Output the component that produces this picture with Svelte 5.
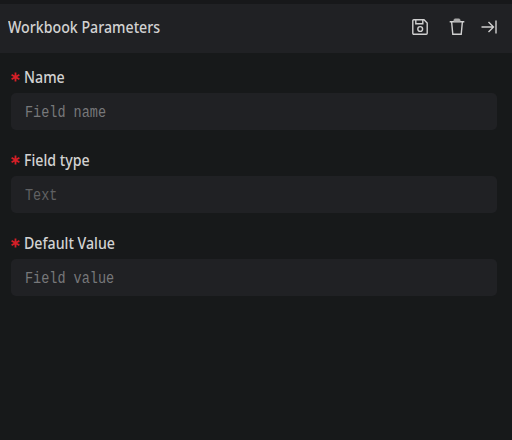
<script>
  const fields = [
    { label: 'Name', hint: 'Field name' },
    { label: 'Field type', hint: 'Text', select: true },
    { label: 'Default Value', hint: 'Field value' }
  ];
</script>

<main>
  <header>
    <h1><span>Workbook Parameters</span></h1>
    <div class="actions">
      <button aria-label="Save">
        <svg width="16" height="16" viewBox="0 0 16 16">
          <path d="M1.8 .8H12L15.2 4v10.2a1 1 0 0 1-1 1H1.8a1 1 0 0 1-1-1V1.8a1 1 0 0 1 1-1ZM3.8 1v3.7h7V1" />
          <circle cx="8.2" cy="10" r="2.4" />
        </svg>
      </button>
      <button aria-label="Delete">
        <svg width="16" height="18" viewBox="0 0 16 18">
          <path d="M.7 3.7h14.6M2.6 3.8l1.2 12.5h8.4l1.2-12.5" />
          <path class="lid" d="M5 3.2V2.1Q5 1 6.1 1h3.8Q11 1 11 2.1v1.1Z" />
        </svg>
      </button>
      <button aria-label="Collapse">
        <svg width="16" height="14" viewBox="0 0 16 14">
          <path d="M.5 7h11.7M7.5 2l5 5-5 5M15 .5v13" />
        </svg>
      </button>
    </div>
  </header>
  <form>
    {#each fields as field}
      <div class="field">
        <div class="label">
          <svg class="star" width="9" height="10" viewBox="0 0 9 10">
            <path d="M4.5 .4v9.2M.6 2.7l7.8 4.6M8.4 2.7l-7.8 4.6" />
          </svg>
          <span>{field.label}</span>
        </div>
        <div class="input" class:select={field.select}><span>{field.hint}</span></div>
      </div>
    {/each}
  </form>
</main>

<style>
  :global(body) { margin: 0; background: #17191a; }
  main {
    box-sizing: border-box;
    height: 440px;
    border-top: 4px solid #17181a;
    background: #17191a;
    color: #d2d2d2;
    font-family: "Noto Sans", sans-serif;
    overflow: hidden;
  }
  header {
    display: flex;
    align-items: center;
    justify-content: space-between;
    height: 49px;
    padding: 0 15px 0 8px;
    background: #202124;
  }
  h1, .label {
    font-size: 16px;
    font-weight: 500;
    line-height: 22px;
    margin: 0;
    white-space: nowrap;
  }
  h1 { padding-bottom: 4px; }
  h1 span, .label span { display: block; transform: scaleX(.887); transform-origin: left; }
  .actions { display: flex; align-items: center; padding-bottom: 3px; }
  button { display: flex; padding: 0; border: 0; background: none; }
  button + button { margin-left: 21px; }
  button:last-child { margin-left: 16px; }
  svg { fill: none; stroke: #d0d0d0; stroke-width: 1.4; }
  .lid { fill: #aaa; stroke: #aaa; stroke-width: 1; }
  form { display: flex; flex-direction: column; gap: 17px; padding: 13px 15px 0 11px; }
  .field { height: 66px; }
  .label { display: flex; align-items: center; height: 22px; gap: 4px; }
  .star { stroke: #d51f27; stroke-width: 1.8; }
  .input {
    box-sizing: border-box;
    display: flex;
    align-items: center;
    height: 37px;
    margin-top: 5px;
    padding: 2px 14px 0;
    border-radius: 5px;
    background: #202124;
    color: #77787a;
    font: 16px/22px "Liberation Mono", monospace;
  }
  .input span { transform: scaleX(.844); transform-origin: left; white-space: pre; }
  .select { color: #606163; }
</style>
